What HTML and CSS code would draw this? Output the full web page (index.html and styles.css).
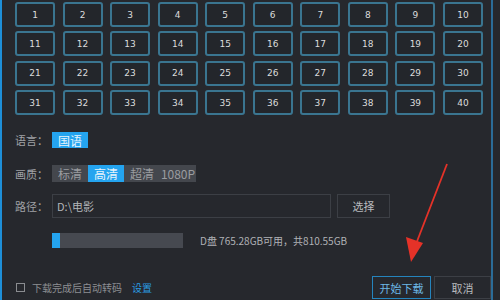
FILE: index.html
```html
<!DOCTYPE html>
<html lang="zh">
<head>
  <meta charset="UTF-8">
  <title>下载</title>
  <link rel="stylesheet" href="styles.css">
</head>
<body>
  <div class="dialog">
    <!-- episode grid -->
    <div class="episodes">
      <div class="ep">1</div><div class="ep">2</div><div class="ep">3</div><div class="ep">4</div><div class="ep">5</div>
      <div class="ep">6</div><div class="ep">7</div><div class="ep">8</div><div class="ep">9</div><div class="ep">10</div>
      <div class="ep">11</div><div class="ep">12</div><div class="ep">13</div><div class="ep">14</div><div class="ep">15</div>
      <div class="ep">16</div><div class="ep">17</div><div class="ep">18</div><div class="ep">19</div><div class="ep">20</div>
      <div class="ep">21</div><div class="ep">22</div><div class="ep">23</div><div class="ep">24</div><div class="ep">25</div>
      <div class="ep">26</div><div class="ep">27</div><div class="ep">28</div><div class="ep">29</div><div class="ep">30</div>
      <div class="ep">31</div><div class="ep">32</div><div class="ep">33</div><div class="ep">34</div><div class="ep">35</div>
      <div class="ep">36</div><div class="ep">37</div><div class="ep">38</div><div class="ep">39</div><div class="ep">40</div>
    </div>

    <!-- options -->
    <div class="row row-lang">
      <span class="label">语言：</span>
      <span class="chip active">国语</span>
    </div>
    <div class="row row-quality">
      <span class="label">画质：</span>
      <div class="segment">
        <span class="chip">标清</span>
        <span class="chip active">高清</span>
        <span class="chip">超清</span>
        <span class="chip">1080P</span>
      </div>
    </div>
    <div class="row row-path">
      <span class="label">路径：</span>
      <div class="path-input">D:\电影</div>
      <button class="btn btn-pick">选择</button>
    </div>
    <div class="row row-disk">
      <div class="disk-bar"><div class="disk-used" style="width: 6%"></div></div>
      <span class="disk-text">D盘 765.28GB可用，共810.55GB</span>
    </div>

    <!-- footer -->
    <div class="footer">
      <label class="auto">
        <span class="box"></span>
        <span>下载完成后自动转码</span>
        <span class="link">设置</span>
      </label>
      <div class="actions">
        <button class="btn btn-start">开始下载</button>
        <button class="btn btn-cancel">取消</button>
      </div>
    </div>

    <svg class="arrow" width="500" height="300" viewBox="0 0 500 300">
      <line x1="447" y1="164" x2="416" y2="244" stroke="#e53228" stroke-width="1.8"/>
      <polygon points="411,262 406,237 423,243" fill="#e53228"/>
    </svg>
  </div>
</body>
</html>
```

FILE: styles.css
```css
body {
  margin: 0;
  background: #26282d;
  font-family: "Noto Sans CJK SC", "Noto Sans", sans-serif;
  color: #a9abaf;
}

.dialog {
  position: relative;
  width: 489px;
  height: 300px;
  border-left: 2px solid #1e8fd8;
  border-right: 2px solid #2b6c98;
  box-sizing: content-box;
}

.episodes {
  display: grid;
  grid-template-columns: repeat(10, 40px);
  grid-auto-rows: 25px;
  column-gap: 7.55px;
  row-gap: 4.4px;
  padding: 2px 0 0 13px;
}

.ep {
  display: flex;
  align-items: center;
  justify-content: center;
  border: 2px solid #3a7590;
  border-radius: 3px;
  background: #23262b;
  color: #dcdcdc;
  font-family: "DejaVu Sans", sans-serif;
  font-size: 9px;
}

.row {
  display: flex;
  align-items: center;
  padding-left: 13px;
}

.label {
  width: 37px;
  font-size: 11px;
  color: #a0a2a6;
}

.row-lang {
  margin-top: 17px;
  height: 16px;
}

.row-quality {
  margin-top: 17px;
  height: 17px;
}

.row-path {
  margin-top: 12px;
  height: 24px;
}

.row-disk {
  margin-top: 15px;
  height: 15px;
  padding-left: 50px;
}

.chip {
  display: flex;
  align-items: center;
  justify-content: center;
  width: 36px;
  height: 100%;
  font-size: 12px;
  color: #9a9ca0;
}

.chip.active {
  background: #24a4ef;
  color: #e8f4fc;
}

.row-lang .chip {
  height: 16px;
}

.segment {
  display: flex;
  height: 17px;
  background: #44474d;
}

.path-input {
  display: flex;
  align-items: center;
  width: 273px;
  height: 22px;
  padding-left: 4px;
  border: 1px solid #3c3f45;
  font-size: 11px;
  color: #b4b6ba;
}

.btn {
  font-family: "Noto Sans CJK SC", "Noto Sans", sans-serif;
  font-size: 11px;
  background: transparent;
  padding: 0;
  cursor: pointer;
}

.btn-pick {
  margin-left: 6px;
  width: 53px;
  height: 24px;
  border: 1px solid #3c3f45;
  color: #b8babe;
}

.disk-bar {
  width: 131px;
  height: 15px;
  background: #464950;
}

.disk-used {
  height: 100%;
  background: #24a4ef;
}

.disk-text {
  margin-left: 17px;
  font-size: 10px;
  color: #b0b2b6;
}

.footer {
  display: flex;
  align-items: center;
  justify-content: space-between;
  margin-top: 28px;
  padding-left: 14px;
  height: 23px;
}

.auto {
  display: flex;
  align-items: center;
  font-size: 10px;
  color: #8c8e92;
}

.box {
  width: 7px;
  height: 7px;
  border: 1px solid #8a8c90;
  margin-right: 7px;
}

.link {
  margin-left: 10px;
  color: #2a9be0;
}

.actions {
  display: flex;
  gap: 3px;
}

.btn-start {
  width: 59px;
  height: 23px;
  border: 1px solid #2584bd;
  color: #6db8e6;
}

.btn-cancel {
  width: 57px;
  height: 23px;
  border: 1px solid #3c3f45;
  color: #b8babe;
}

.arrow {
  position: absolute;
  left: -2px;
  top: 0;
  pointer-events: none;
}
```
